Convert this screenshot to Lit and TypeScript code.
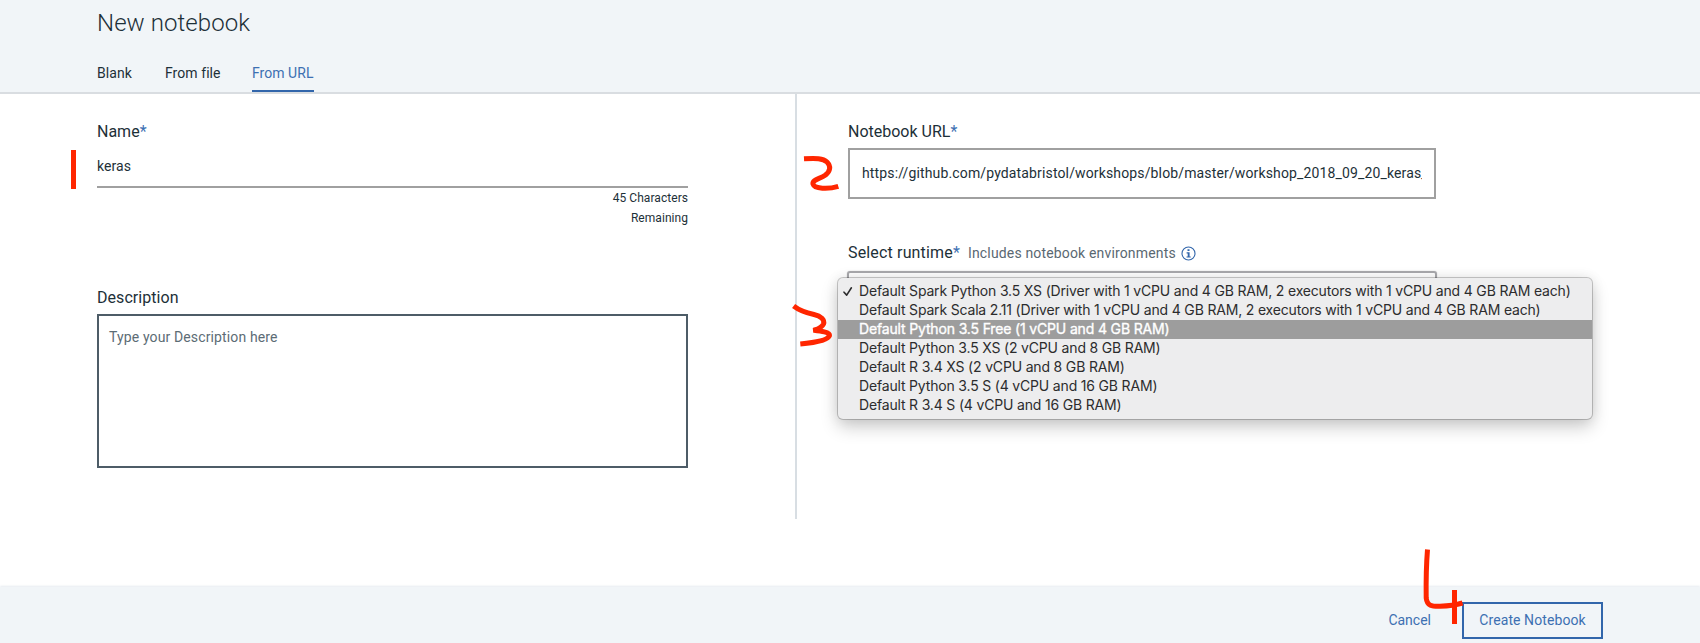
import { LitElement, html, css, svg } from 'lit';
import { customElement, property } from 'lit/decorators.js';
import { classMap } from 'lit/directives/class-map.js';

@customElement('runtime-menu')
class RuntimeMenu extends LitElement {
  @property({ type: Array }) options: string[] = [];
  @property({ type: Number }) checked = 0;
  @property({ type: Number }) active = 2;

  static styles = css`
    :host {
      display: block;
      box-sizing: border-box;
      padding: 4px 0;
      border-radius: 5px;
      background: #ededee;
      box-shadow: 0 0 0 1px rgba(0, 0, 0, 0.2), 0 8px 18px rgba(0, 0, 0, 0.2), 0 0 14px rgba(0, 0, 0, 0.09);
      font-family: Inter, sans-serif;
      font-size: 14px;
      line-height: 17px;
      letter-spacing: -0.176px;
      color: #2c2c2d;
    }
    .row {
      display: flex;
      align-items: flex-start;
      height: 19px;
      white-space: nowrap;
    }
    .mark {
      flex: none;
      width: 21px;
      height: 19px;
    }
    .active {
      background: #9d9d9d;
      color: #fff;
      -webkit-text-stroke: 0.35px #fff;
    }
    .active .label {
      letter-spacing: -0.155px;
    }
    .mark path {
      fill: none;
      stroke: #2c2c2d;
      stroke-width: 1.6;
      stroke-linecap: round;
      stroke-linejoin: round;
    }
  `;

  render() {
    return this.options.map(
      (o, i) => html`<div class=${classMap({ row: true, active: i === this.active })}>
        <svg class="mark" viewBox="0 0 21 19">
          ${i === this.checked ? svg`<path d="M6 10.2 L8.7 13.1 L13.4 5.8" />` : ''}
        </svg>
        <span class="label">${o}</span>
      </div>`,
    );
  }
}

@customElement('app-root')
class AppRoot extends LitElement {
  private runtimes = [
    'Default Spark Python 3.5 XS (Driver with 1 vCPU and 4 GB RAM, 2 executors with 1 vCPU and 4 GB RAM each)',
    'Default Spark Scala 2.11 (Driver with 1 vCPU and 4 GB RAM, 2 executors with 1 vCPU and 4 GB RAM each)',
    'Default Python 3.5 Free (1 vCPU and 4 GB RAM)',
    'Default Python 3.5 XS (2 vCPU and 8 GB RAM)',
    'Default R 3.4 XS (2 vCPU and 8 GB RAM)',
    'Default Python 3.5 S (4 vCPU and 16 GB RAM)',
    'Default R 3.4 S (4 vCPU and 16 GB RAM)',
  ];

  static styles = css`
    :host {
      display: flex;
      flex-direction: column;
      position: relative;
      box-sizing: border-box;
      height: 643px;
      overflow: hidden;
      background: #fff;
      font-family: Roboto, sans-serif;
      font-size: 14px;
      line-height: 20px;
      color: #1d3038;
    }
    header {
      box-sizing: border-box;
      height: 94px;
      padding: 7px 97px 0;
      background: #f1f5f8;
      border-bottom: 2px solid #d9dde1;
    }
    h1 {
      margin: 0 0 24px;
      font-size: 24px;
      font-weight: 300;
      line-height: 32px;
      letter-spacing: 0.08px;
    }
    nav {
      display: flex;
      gap: 32px;
    }
    .tab {
      padding-bottom: 7px;
      border-bottom: 2px solid transparent;
      white-space: nowrap;
    }
    .tab.selected {
      color: #3d70b2;
      border-color: #3266ab;
      letter-spacing: 0.04px;
    }
    .blank {
      width: 36px;
      letter-spacing: 0.1px;
    }
    .file {
      width: 55px;
      letter-spacing: 0.06px;
    }
    .selected {
      width: 62px;
    }
    main {
      display: flex;
      height: 425px;
      margin-bottom: 68px;
    }
    .left,
    .right {
      box-sizing: border-box;
      padding-top: 28px;
    }
    .left {
      width: 797px;
      padding-left: 97px;
      padding-right: 107px;
      border-right: 2px solid #d8dee3;
    }
    .right {
      padding-left: 51px;
    }
    .caption {
      display: flex;
      height: 20px;
      font-size: 16px;
    }
    .star {
      color: #3d70b2;
      font-size: 16px;
    }
    .line {
      box-sizing: border-box;
      height: 46px;
      padding-top: 14px;
      border-bottom: 2px solid #a0a0a0;
      letter-spacing: 0.06px;
    }
    .count {
      width: 80px;
      margin-left: auto;
      font-size: 12px;
      letter-spacing: 0.05px;
      text-align: right;
    }
    .about {
      margin-top: 60px;
      margin-bottom: 6px;
      letter-spacing: 0.05px;
    }
    .area {
      box-sizing: border-box;
      height: 154px;
      padding: 11px 10px;
      border: 2px solid #4d5c67;
      color: #5c6c75;
      letter-spacing: 0.13px;
    }
    .url {
      box-sizing: border-box;
      width: 588px;
      height: 51px;
      margin-top: 6px;
      padding: 13px 12px 0;
      border: 2px solid #a0a0a0;
      letter-spacing: 0.14px;
    }
    .value {
      overflow: hidden;
      width: 559.5px;
      white-space: nowrap;
    }
    .runtime {
      margin-top: 44px;
      letter-spacing: 0.16px;
    }
    .hint {
      margin: 0 5px 0 8px;
      font-size: 14px;
      line-height: 21px;
      letter-spacing: 0.16px;
      color: #5a6872;
    }
    .info {
      width: 15px;
      height: 15px;
      margin-top: 2.5px;
    }
    .select {
      position: relative;
      box-sizing: border-box;
      width: 590px;
      height: 50px;
      margin: 8px 0 0 -1px;
      border: 2px solid #a9a9ad;
      border-radius: 3px;
      box-shadow: 0 0 1px #a9a9ad;
    }
    runtime-menu {
      position: absolute;
      top: 5px;
      left: -11px;
      width: 754px;
    }
    footer {
      display: flex;
      align-items: flex-start;
      justify-content: flex-end;
      box-sizing: border-box;
      height: 56px;
      padding: 15px 97px 0 0;
      background: #f1f5f8;
      box-shadow: 0 -1px 2px #e6ebf0;
      color: #3d70b2;
    }
    .cancel {
      margin: 8px 31px 0 0;
    }
    .create {
      box-sizing: border-box;
      width: 141px;
      height: 37px;
      padding: 6px 0 0;
      border: 2px solid #3266ab;
      text-align: center;
      letter-spacing: 0.09px;
    }
    .ink {
      position: absolute;
      inset: 0;
      width: 1700px;
      height: 643px;
      fill: none;
      stroke: #ff2600;
      stroke-width: 5;
      pointer-events: none;
    }
  `;

  render() {
    return html`
      <header>
        <h1>New notebook</h1>
        <nav>
          <div class="tab blank">Blank</div>
          <div class="tab file">From file</div>
          <div class="tab selected">From URL</div>
        </nav>
      </header>
      <main>
        <section class="left">
          <div class="caption"><span>Name</span><span class="star">*</span></div>
          <div class="line">keras</div>
          <div class="count">45 Characters Remaining</div>
          <div class="caption about">Description</div>
          <div class="area">Type your Description here</div>
        </section>
        <section class="right">
          <div class="caption"><span>Notebook URL</span><span class="star">*</span></div>
          <div class="url">
            <div class="value">https://github.com/pydatabristol/workshops/blob/master/workshop_2018_09_20_keras_</div>
          </div>
          <div class="caption runtime">
            <span>Select runtime</span><span class="star">*</span>
            <span class="hint">Includes notebook environments</span>
            <svg class="info" viewBox="0 0 15 15">
              <circle cx="7.5" cy="7.5" r="6.5" fill="none" stroke="#3266ab" stroke-width="1.1" />
              <path d="M6.5 3.3h2v1.8h-2z M5.6 6.2h3v4.2h1.100v1.200H5.500v-1.200h1.200V7.400H5.600z" fill="#3266ab" />
            </svg>
          </div>
          <div class="select">
            <runtime-menu .options=${this.runtimes}></runtime-menu>
          </div>
        </section>
      </main>
      <footer>
        <div class="cancel">Cancel</div>
        <div class="create">Create Notebook</div>
      </footer>
      <svg class="ink" viewBox="0 0 1700 643">
        <path d="M73.5 150V189" />
        <path d="M804 158.800C816 158.200 823 158.200 827 162C831 166 830.500 171 825.500 175C820 179 812 179.500 813 184C814.500 189 828 189.500 838.300 186.300" />
        <path d="M793.600 306C800 311 807 313 814 314.500C821 316 825 320 823.500 324C821.500 328.500 816 329.500 813.500 330.300C820 331 830 332 829.500 335.500C828 341 811 343 800.300 344" />
        <path d="M1427.500 549.500C1426 568 1426 583 1426.200 598C1427 606 1432 606.500 1440 606.300C1449 606 1456 605 1462.500 603" />
        <path d="M1454.500 590V624" />
      </svg>
    `;
  }
}
